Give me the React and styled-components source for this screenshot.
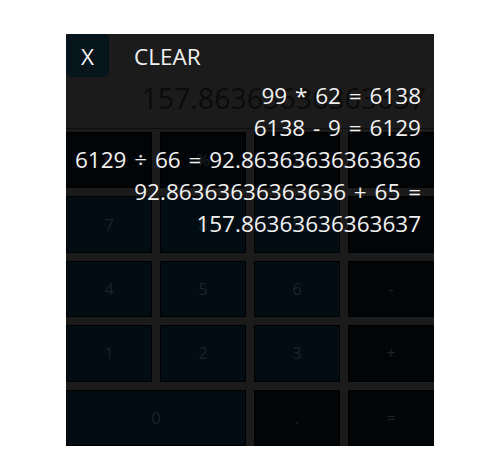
import React from 'react'
import styled, { createGlobalStyle } from 'styled-components';

const history = [
    '99 * 62 = 6138',
    '6138 - 9 = 6129',
    '6129 ÷ 66 = 92.86363636363636',
    '92.86363636363636 + 65 = 157.86363636363637',
]

const keys = [
    { label: 'C', kind: 'op' },
    { label: '%', kind: 'op' },
    { label: '⌫', kind: 'op' },
    { label: '÷', kind: 'op' },
    { label: '7' }, { label: '8' }, { label: '9' }, { label: '*', kind: 'op' },
    { label: '4' }, { label: '5' }, { label: '6' }, { label: '-', kind: 'op' },
    { label: '1' }, { label: '2' }, { label: '3' }, { label: '+', kind: 'op' },
    { label: '0', wide: true }, { label: '.', kind: 'op' }, { label: '=', kind: 'op' },
]

function App() {
    return (
        <Page>
            <GlobalStyle />
            <Calculator>
                <Display>157.86363636363637</Display>
                <Keypad>
                    {keys.map((k) => (
                        <Key key={k.label} $op={k.kind === 'op'} $wide={k.wide}>
                            {k.label}
                        </Key>
                    ))}
                </Keypad>

                <History>
                    <HistoryHeader>
                        <CloseButton>X</CloseButton>
                        <ClearButton>CLEAR</ClearButton>
                    </HistoryHeader>
                    <HistoryList>
                        {history.map((line) => (
                            <HistoryItem key={line}>{line}</HistoryItem>
                        ))}
                    </HistoryList>
                </History>
            </Calculator>
        </Page>
    )
}

export default App

const GlobalStyle = createGlobalStyle`
body {
    margin: 0;
    background: #ffffff;
    font-family: "Open Sans", "DejaVu Sans", sans-serif;
}
`;
const Page = styled.div`
padding: 34px 0 0 66px;
`;
const Calculator = styled.div`
position: relative;
width: 368px;
height: 412px;
background: #1b1b1b;
display: flex;
flex-direction: column;
`;
const Display = styled.div`
height: 95px;
box-sizing: border-box;
border-bottom: 1px solid #0d0d0d;
display: flex;
align-items: flex-end;
justify-content: flex-end;
padding: 0 8px 11px 0;
font-size: 28.5px;
color: #0b0b0b;
white-space: nowrap;
overflow: hidden;
`;
const Keypad = styled.div`
flex: 1;
margin-top: 3px;
display: grid;
grid-template-columns: repeat(4, 1fr);
grid-template-rows: repeat(5, 1fr);
gap: 8px;
`;
const Key = styled.button`
grid-column: ${(p) => (p.$wide ? 'span 2' : 'auto')};
border: 1px solid #000000;
background: ${(p) => (p.$op ? '#020507' : '#020d13')};
color: #1b2328;
font-family: inherit;
font-size: 16px;
padding: 0;
`;
const History = styled.div`
position: absolute;
inset: 0;
display: flex;
flex-direction: column;
color: #f2f2f2;
font-size: 22.5px;
`;
const HistoryHeader = styled.div`
display: flex;
align-items: center;
height: 43px;
gap: 25px;
`;
const CloseButton = styled.div`
width: 43px;
height: 43px;
border-radius: 5px;
background: #06151b;
display: flex;
align-items: center;
justify-content: center;
padding-top: 1px;
box-sizing: border-box;
`;
const ClearButton = styled.div`
line-height: 1;
padding-top: 3px;
`;
const HistoryList = styled.div`
padding: 3px 13px 0 6px;
text-align: right;
line-height: 32px;
word-spacing: 2px;
`;
const HistoryItem = styled.div`
`;
